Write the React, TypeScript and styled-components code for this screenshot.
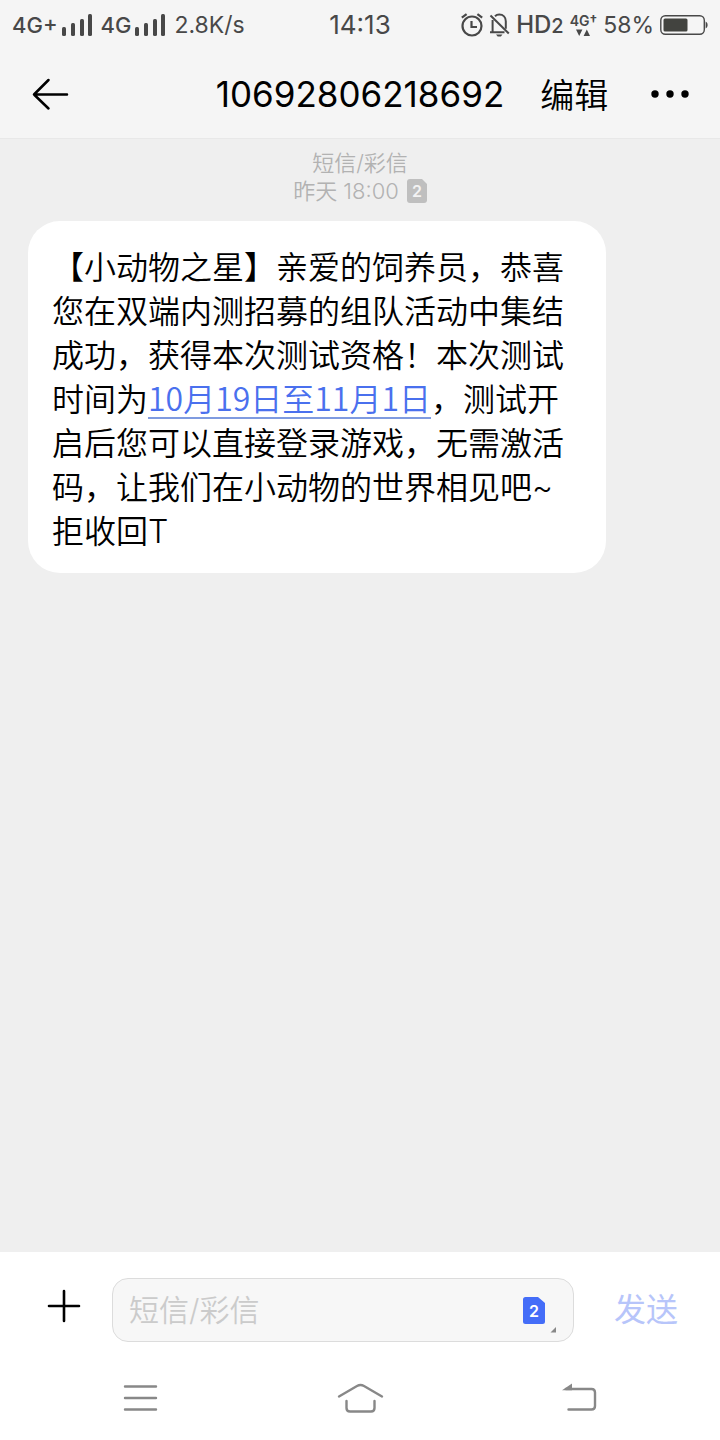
import React from 'react';
import styled, { createGlobalStyle } from 'styled-components';

const GlobalStyle = createGlobalStyle`
  *, *::before, *::after { box-sizing: border-box; }
  body {
    margin: 0;
    background: #efefef;
    color: #000;
    font-family: Inter, "Noto Sans CJK SC", sans-serif;
  }
  button, input { font: inherit; color: inherit; }
  svg { display: block; flex: none; }
`;

const Screen = styled.div`
  display: flex;
  flex-direction: column;
  min-height: 100vh;
`;

const TopArea = styled.header`
  background: #f5f5f5;
  border-bottom: 1px solid #e8e8e8;
`;

const StatusBar = styled.div`
  display: grid;
  grid-template-columns: 1fr auto 1fr;
  align-items: center;
  height: 50px;
  padding: 0 12px;
  color: #484848;
`;

const StatusGroup = styled.div<{ $end?: boolean }>`
  display: flex;
  align-items: center;
  justify-content: ${(p) => (p.$end ? 'flex-end' : 'flex-start')};
  gap: ${(p) => (p.$end ? 6 : 8)}px;
  white-space: nowrap;
`;

const StatusText = styled.span<{ $size?: number; $weight?: number }>`
  font-size: ${(p) => p.$size ?? 23}px;
  font-weight: ${(p) => p.$weight ?? 400};
  line-height: 28px;
`;

const Carrier = styled.span`
  display: flex;
  align-items: center;
  gap: 4px;
`;

const HdSub = styled.span`
  font-size: 20px;
`;

const DataBadge = styled.span`
  display: flex;
  flex-direction: column;
  align-items: center;
  gap: 1px;
  font-size: 14px;
  font-weight: 600;
  line-height: 14px;
`;

const TitleBar = styled.div`
  display: grid;
  grid-template-columns: 1fr auto 1fr;
  align-items: center;
  height: 88px;
  padding: 0 30px;
`;

const PlainButton = styled.button`
  display: flex;
  align-items: center;
  justify-content: center;
  padding: 0;
  border: 0;
  background: none;
  cursor: pointer;
`;

const Title = styled.h1`
  margin: 0;
  font-size: 35px;
  font-weight: 400;
  line-height: 44px;
`;

const Actions = styled.div`
  display: flex;
  align-items: center;
  justify-content: space-between;
  padding-left: 36px;
`;

const EditButton = styled(PlainButton)`
  padding-top: 4px;
  font-size: 34px;
  font-weight: 350;
  line-height: 44px;
`;

const Thread = styled.main`
  flex: 1;
  padding: 10px 28px 28px;
`;

const Meta = styled.div`
  display: flex;
  flex-direction: column;
  align-items: center;
  margin-bottom: 16px;
  color: #b2b2b2;
  font-size: 22px;
  font-weight: 350;
  line-height: 28px;
`;

const MetaRow = styled.div`
  display: flex;
  align-items: center;
  gap: 8px;
`;

const Bubble = styled.p`
  width: fit-content;
  max-width: 578px;
  margin: 0;
  padding: 25px 24px 19px;
  border-radius: 32px;
  background: #fff;
  font-size: 32px;
  font-weight: 350;
  line-height: 44px;
`;

const DateLink = styled.a`
  color: #4a70ee;
  font-family: "Noto Sans CJK SC", sans-serif;
  line-height: 32px;
  text-decoration: underline;
  text-decoration-color: #7f9be0;
  text-decoration-thickness: 2px;
  text-underline-offset: 6px;
`;

const Composer = styled.form`
  display: flex;
  align-items: center;
  height: 116px;
  padding: 0 42px;
  background: #fff;
`;

const AddButton = styled(PlainButton)`
  width: 44px;
  height: 44px;
  padding-bottom: 8px;
`;

const Field = styled.div`
  display: flex;
  flex: 1;
  align-items: center;
  min-width: 0;
  height: 64px;
  margin: 0 40px 0 26px;
  padding: 0 16px;
  border: 1px solid #dcdcdc;
  border-radius: 16px;
  background: #f7f7f7;
`;

const MessageInput = styled.input`
  flex: 1;
  min-width: 0;
  padding: 0;
  border: 0;
  outline: 0;
  background: none;
  font-size: 30px;
  font-weight: 350;
  line-height: 44px;
  &::placeholder { color: #cbcbcb; opacity: 1; }
`;

const SendButton = styled(PlainButton)`
  color: #b7c5fa;
  font-size: 32px;
  font-weight: 400;
  line-height: 44px;
`;

const NavBar = styled.nav`
  display: grid;
  grid-template-columns: repeat(3, 1fr);
  height: 72px;
  padding: 0 30px 12px;
  background: #fff;
`;

const SimGlyph = styled.text`
  font-family: Inter, sans-serif;
  font-weight: 600;
  text-anchor: middle;
`;

const Signal = () => (
  <svg width="31" height="22" viewBox="0 0 31 22" fill="currentColor" aria-hidden="true">
    <rect x="0" y="13" width="4" height="9" rx="1.5" />
    <rect x="9" y="9" width="4" height="13" rx="1.5" />
    <rect x="18" y="5" width="4" height="17" rx="1.5" />
    <rect x="26" y="0" width="4" height="22" rx="1.5" />
  </svg>
);

const AlarmIcon = () => (
  <svg width="22" height="24" viewBox="0 0 22 24" fill="none" stroke="currentColor" strokeWidth="2.2" aria-hidden="true">
    <circle cx="11" cy="13" r="9.5" />
    <path d="M10.5 8v6H16" />
    <path d="M.8 4.6 5.6 1.2M21.2 4.6 16.4 1.2" />
  </svg>
);

const MutedIcon = () => (
  <svg width="21" height="24" viewBox="0 0 21 24" fill="none" stroke="currentColor" strokeWidth="2" aria-hidden="true">
    <path d="M6 3.2C7.2 2 8.6 1.5 10.2 1.5c4 0 6.6 2.9 6.6 6.8v7.5M3.6 7v12M1 19.300h14.5" />
    <path d="M1.5 2.5 19.8 20.5" />
    <path d="M7 21.5h6.5L11.8 23.5H8.7z" fill="currentColor" stroke="none" />
  </svg>
);

const DataArrows = () => (
  <svg width="14" height="7" viewBox="0 0 14 7" fill="currentColor" aria-hidden="true">
    <path d="M0 .5h6.4L3.2 7zM7.6 7h6.4L10.8.5z" />
  </svg>
);

const BatteryIcon = () => (
  <svg width="48" height="20" viewBox="0 0 48 20" fill="none" aria-hidden="true">
    <rect x=".8" y=".8" width="43.5" height="18.4" rx="4.5" stroke="#484848" strokeWidth="1.4" />
    <rect x="3.5" y="3.5" width="24" height="13" rx="1.5" fill="#42433f" />
    <path d="M45.6 6.5c1.5.8 2 2 2 3.5s-.5 2.7-2 3.5z" fill="#484848" />
  </svg>
);

const BackArrow = () => (
  <svg width="40" height="34" viewBox="0 0 40 34" fill="none" stroke="#000" strokeWidth="2.5" strokeLinecap="round" strokeLinejoin="round" aria-hidden="true">
    <path d="M18.5 3 4 17.5l14.5 14M4 17.5h33" />
  </svg>
);

const MoreDots = () => (
  <svg width="40" height="10" viewBox="0 0 40 10" fill="#000" aria-hidden="true">
    <circle cx="5" cy="5" r="3.7" />
    <circle cx="20" cy="5" r="3.7" />
    <circle cx="35" cy="5" r="3.7" />
  </svg>
);

const SimBadge = () => (
  <svg width="20" height="24" viewBox="0 0 20 24" aria-label="SIM 2">
    <path d="M3 0h12l5 5v16a3 3 0 0 1-3 3H3a3 3 0 0 1-3-3V3a3 3 0 0 1 3-3z" fill="#bfbfbf" />
    <SimGlyph x="10" y="18" fontSize="16" fill="#f3f3f3">2</SimGlyph>
  </svg>
);

const SimPicker = () => (
  <svg width="34" height="48" viewBox="0 -11 34 48" aria-hidden="true">
    <path d="M2.5 0H15l7 6v18.5a2.5 2.5 0 0 1-2.5 2.5h-17A2.5 2.5 0 0 1 0 24.5v-22A2.5 2.5 0 0 1 2.5 0z" fill="#446df8" />
    <SimGlyph x="11" y="19.5" fontSize="16" fill="#fff">2</SimGlyph>
    <path d="M33 30v5.5h-5.5z" fill="#888" />
  </svg>
);

const PlusIcon = () => (
  <svg width="36" height="36" viewBox="0 0 36 36" stroke="#000" strokeWidth="2.6" strokeLinecap="round" aria-hidden="true">
    <path d="M18 3v30M3 18h30" />
  </svg>
);

const NavIcon = ({ d, arrow }: { d: string; arrow?: string }) => (
  <svg width="48" height="32" viewBox="0 0 48 32" fill="none" stroke="#888" strokeWidth="2.4" strokeLinecap="round" strokeLinejoin="round" aria-hidden="true">
    <path d={d} />
    {arrow && <path d={arrow} fill="#888" stroke="none" />}
  </svg>
);

export default function App() {
  return (
    <Screen>
      <GlobalStyle />
      <TopArea>
        <StatusBar>
          <StatusGroup>
            <Carrier>
              <StatusText $size={22} $weight={500}>4G+</StatusText>
              <Signal />
            </Carrier>
            <Carrier>
              <StatusText $size={22} $weight={500}>4G</StatusText>
              <Signal />
            </Carrier>
            <StatusText>2.8K/s</StatusText>
          </StatusGroup>
          <StatusText $size={26}>14:13</StatusText>
          <StatusGroup $end>
            <AlarmIcon />
            <MutedIcon />
            <StatusText $size={24} $weight={500}>HD<HdSub>2</HdSub></StatusText>
            <DataBadge>
              <span>4G†</span>
              <DataArrows />
            </DataBadge>
            <StatusText>58%</StatusText>
            <BatteryIcon />
          </StatusGroup>
        </StatusBar>
        <TitleBar>
          <div>
            <PlainButton type="button" aria-label="返回"><BackArrow /></PlainButton>
          </div>
          <Title>10692806218692</Title>
          <Actions>
            <EditButton type="button">编辑</EditButton>
            <PlainButton type="button" aria-label="更多"><MoreDots /></PlainButton>
          </Actions>
        </TitleBar>
      </TopArea>

      <Thread>
        <Meta>
          <span>短信/彩信</span>
          <MetaRow>
            <span>昨天 18:00</span>
            <SimBadge />
          </MetaRow>
        </Meta>
        <Bubble>
          【小动物之星】亲爱的饲养员，恭喜您在双端内测招募的组队活动中集结成功，获得本次测试资格！本次测试时间为<DateLink href="#date">10月19日至11月1日</DateLink>，测试开启后您可以直接登录游戏，无需激活码，让我们在小动物的世界相见吧~拒收回T
        </Bubble>
      </Thread>

      <Composer onSubmit={(e) => e.preventDefault()}>
        <AddButton type="button" aria-label="添加"><PlusIcon /></AddButton>
        <Field>
          <MessageInput type="text" placeholder="短信/彩信" aria-label="短信/彩信" />
          <PlainButton type="button" aria-label="选择 SIM 卡"><SimPicker /></PlainButton>
        </Field>
        <SendButton type="submit">发送</SendButton>
      </Composer>
      <NavBar aria-label="系统导航">
        <PlainButton type="button" aria-label="菜单">
          <NavIcon d="M9 4.5h31M9 16h31M9 27.5h31" />
        </PlainButton>
        <PlainButton type="button" aria-label="主页">
          <NavIcon d="M3 14.5 21 4Q24.5 2 28 4L46 14.500M10.500 19v7q0 3.500 3.500 3.500h21q3.500 0 3.500-3.500v-7" />
        </PlainButton>
        <PlainButton type="button" aria-label="返回上一级">
          <NavIcon d="M10 7h25.500q3.500 0 3.500 3.500v13.500q0 3.500-3.500 3.500H12.500" arrow="M6 8.200 16 1.500v6.700z" />
        </PlainButton>
      </NavBar>
    </Screen>
  );
}
